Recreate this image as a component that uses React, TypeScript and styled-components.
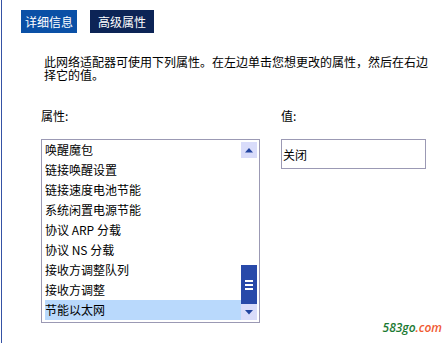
import React from "react";
import styled, { createGlobalStyle } from "styled-components";

const Global = createGlobalStyle`
  html, body { margin: 0; padding: 0; background: #ffffff; }
  body { width: 448px; height: 343px; overflow: hidden; }
  * { box-sizing: border-box; }
`;

const Page = styled.div`
  position: relative;
  width: 447px;
  height: 343px;
  margin-left: 1px;
  border-left: 1px solid #3552a4;
  font-family: "Noto Sans CJK SC", "DejaVu Sans", sans-serif;
  font-size: 12px;
  color: #000;
  display: flex;
  flex-direction: column;
`;

const TabBar = styled.div`
  display: flex;
  gap: 13px;
  padding: 10px 0 0 19px;
`;

const Tab = styled.div<{ $w: number; $active?: boolean }>`
  width: ${(p) => p.$w}px;
  height: 23px;
  display: flex;
  align-items: center;
  justify-content: center;
  color: #ffffff;
  font-size: 12px;
  background: ${(p) => (p.$active ? "#0c2456" : "#0a50a6")};
`;

const Content = styled.div`
  padding: 22px 0 0 39px;
  display: flex;
  flex-direction: column;
`;

const Description = styled.p`
  margin: 0 0 0 3px;
  line-height: 13px;
  font-size: 12px;
  white-space: nowrap;
`;

const Columns = styled.div`
  display: flex;
  gap: 21px;
  margin-top: 28px;
`;

const Column = styled.div<{ $w: number }>`
  width: ${(p) => p.$w}px;
  display: flex;
  flex-direction: column;
`;

const Label = styled.div`
  height: 14px;
  line-height: 14px;
  margin-bottom: 16px;
`;

const ListBox = styled.div`
  height: 184px;
  border: 1px solid #9b99b4;
  display: flex;
  padding: 0 2px 0 3px;
`;

const Items = styled.div`
  flex: 1;
  display: flex;
  flex-direction: column;
`;

const Item = styled.div<{ $selected?: boolean }>`
  height: 20px;
  line-height: 20px;
  white-space: nowrap;
  background: ${(p) => (p.$selected ? "#b9d9fc" : "transparent")};
`;

const ScrollBar = styled.div`
  width: 16px;
  margin: 2px 0;
  display: flex;
  flex-direction: column;
`;

const ArrowButton = styled.div`
  height: 16px;
  background: #d9dcfa;
  display: flex;
  align-items: center;
  justify-content: center;
`;

const Track = styled.div`
  flex: 1;
  display: flex;
  flex-direction: column;
  justify-content: flex-end;
`;

const Thumb = styled.div`
  height: 39px;
  background: #2849a9;
  display: flex;
  flex-direction: column;
  align-items: center;
  justify-content: center;
  gap: 2px;
`;

const Grip = styled.div`
  width: 8px;
  height: 2px;
  background: #ffffff;
`;

const ValueBox = styled.div`
  height: 30px;
  border: 1px solid #9b99b4;
  padding-left: 1px;
  line-height: 30px;
`;

const Watermark = styled.div`
  position: absolute;
  right: 6px;
  bottom: 7px;
  font-family: "Open Sans", "DejaVu Sans", sans-serif;
  font-style: italic;
  font-weight: 600;
  font-size: 12px;
  color: #1b7a33;
`;

const Dot = styled.span`
  color: #f05a32;
`;

const Triangle = ({ down }: { down?: boolean }) => (
  <svg width="8" height="5" viewBox="0 0 8 5">
    <polygon
      points={down ? "0,0 8,0 4,4.5" : "0,4.5 8,4.5 4,0"}
      fill="#2244a0"
    />
  </svg>
);

const items = [
  "唤醒魔包",
  "链接唤醒设置",
  "链接速度电池节能",
  "系统闲置电源节能",
  "协议 ARP 分载",
  "协议 NS 分载",
  "接收方调整队列",
  "接收方调整",
  "节能以太网",
];

export default function App() {
  return (
    <>
      <Global />
      <Page>
        <TabBar>
          <Tab $w={56}>详细信息</Tab>
          <Tab $w={64} $active>
            高级属性
          </Tab>
        </TabBar>
        <Content>
          <Description>
            此网络适配器可使用下列属性。在左边单击您想更改的属性，然后在右边
            <br />
            择它的值。
          </Description>
          <Columns>
            <Column $w={219}>
              <Label>属性:</Label>
              <ListBox>
                <Items>
                  {items.map((t, i) => (
                    <Item key={t} $selected={i === items.length - 1}>
                      {t}
                    </Item>
                  ))}
                </Items>
                <ScrollBar>
                  <ArrowButton>
                    <Triangle />
                  </ArrowButton>
                  <Track>
                    <Thumb>
                      <Grip />
                      <Grip />
                      <Grip />
                    </Thumb>
                  </Track>
                  <ArrowButton>
                    <Triangle down />
                  </ArrowButton>
                </ScrollBar>
              </ListBox>
            </Column>
            <Column $w={145}>
              <Label>值:</Label>
              <ValueBox>关闭</ValueBox>
            </Column>
          </Columns>
        </Content>
        <Watermark>
          583go<Dot>.com</Dot>
        </Watermark>
      </Page>
    </>
  );
}
